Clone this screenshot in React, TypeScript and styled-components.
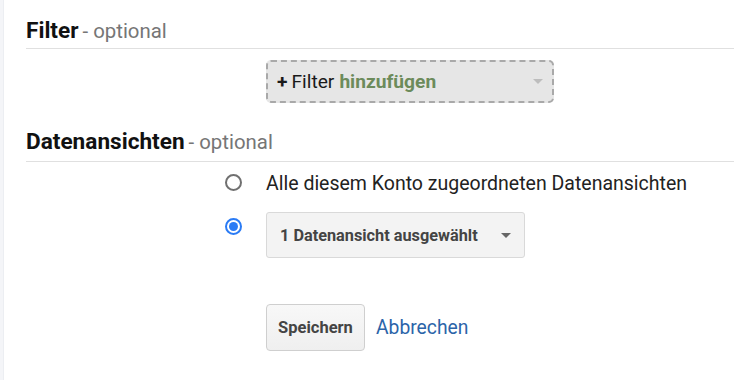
import React from "react";
import styled, { createGlobalStyle } from "styled-components";

const Global = createGlobalStyle`
  html, body { margin: 0; padding: 0; background: #fff; }
  body { font-family: Roboto, "Noto Sans", "Liberation Sans", sans-serif; }
`;

const Page = styled.div`
  display: flex;
  width: 734px;
  height: 380px;
  overflow: hidden;
`;

const Strip = styled.div`
  width: 3px;
  flex: none;
  background: #f4f5f8;
  border-right: 1px solid #eceef2;
`;

const Content = styled.div`
  flex: 1;
  padding-left: 22px;
  display: flex;
  flex-direction: column;
`;

const Heading = styled.div<{ $top: number; $pb: number }>`
  margin-top: ${(p) => p.$top}px;
  padding-bottom: ${(p) => p.$pb}px;
  border-bottom: 1px solid #e0e0e0;
  line-height: 26px;
  height: 26px;
  white-space: nowrap;
`;

const Title = styled.span`
  font-size: 22.6px;
  font-weight: 700;
  color: #111;
`;

const Optional = styled.span`
  font-size: 20.4px;
  color: #767676;
`;

const Body = styled.div<{ $top: number }>`
  padding-left: 240px;
  margin-top: ${(p) => p.$top}px;
  display: flex;
  flex-direction: column;
`;

const FilterButton = styled.div`
  box-sizing: border-box;
  width: 288px;
  height: 43px;
  background: #e6e6e6;
  border: 2px dashed #a9a9a9;
  border-radius: 5px;
  display: flex;
  align-items: center;
  padding: 0 9px 0 9px;
  font-size: 19.2px;
  color: #1a1a1a;
`;

const Plus = styled.span`
  font-weight: 700;
  margin-right: 4px;
`;

const Green = styled.span`
  font-weight: 700;
  color: #6c8b5b;
  margin-left: 5px;
`;

const Caret = styled.span<{ $color: string }>`
  margin-left: auto;
  width: 0;
  height: 0;
  border-left: 5px solid transparent;
  border-right: 5px solid transparent;
  border-top: 5px solid ${(p) => p.$color};
`;

const OptionRow = styled.div<{ $top?: number }>`
  display: flex;
  align-items: flex-start;
  margin-top: ${(p) => p.$top ?? 0}px;
  margin-left: -41px;
`;

const Radio = styled.span<{ $checked?: boolean; $mt: number }>`
  box-sizing: border-box;
  flex: none;
  width: 17px;
  height: 17px;
  border-radius: 50%;
  margin-top: ${(p) => p.$mt}px;
  margin-right: 24px;
  border: 2px solid ${(p) => (p.$checked ? "#2a7bf5" : "#707070")};
  position: relative;
  &::after {
    content: "";
    display: ${(p) => (p.$checked ? "block" : "none")};
    position: absolute;
    left: 2px;
    top: 2px;
    width: 9px;
    height: 9px;
    border-radius: 50%;
    background: #2a7bf5;
  }
`;

const Label = styled.span`
  font-size: 19.5px;
  line-height: 24px;
  color: #222;
  white-space: nowrap;
`;

const Select = styled.div`
  box-sizing: border-box;
  width: 259px;
  height: 46px;
  background: #f3f3f3;
  border: 1px solid #d9d9d9;
  border-radius: 3px;
  display: flex;
  align-items: center;
  padding: 0 13px 0 13px;
  font-size: 16.3px;
  font-weight: 700;
  color: #444;
  white-space: nowrap;
`;

const Actions = styled.div`
  display: flex;
  align-items: center;
  margin-top: 46px;
`;

const SaveButton = styled.button`
  box-sizing: border-box;
  width: 99px;
  height: 47px;
  border: 1.5px solid #cfcfcf;
  border-radius: 4px;
  background: linear-gradient(#f8f8f8, #efefef);
  font-family: Roboto, "Noto Sans", "Liberation Sans", sans-serif;
  font-size: 16.5px;
  font-weight: 700;
  color: #444;
  padding: 0;
`;

const CancelLink = styled.a`
  margin-left: 11px;
  font-size: 19.3px;
  color: #2b64a9;
  text-decoration: none;
`;

export default function App() {
  return (
    <>
      <Global />
      <Page>
        <Strip />
        <Content>
          <Heading $top={18} $pb={4}>
            <Title>Filter</Title> <Optional>- optional</Optional>
          </Heading>
          <Body $top={11}>
            <FilterButton>
              <Plus>+</Plus>Filter<Green>hinzufügen</Green>
              <Caret $color="#bdbdbd" />
            </FilterButton>
          </Body>
          <Heading $top={26} $pb={6}>
            <Title>Datenansichten</Title> <Optional>- optional</Optional>
          </Heading>
          <Body $top={10}>
            <OptionRow>
              <Radio $mt={2} />
              <Label>Alle diesem Konto zugeordneten Datenansichten</Label>
            </OptionRow>
            <OptionRow $top={16}>
              <Radio $checked $mt={6} />
              <Select>
                1 Datenansicht ausgewählt
                <Caret $color="#666" />
              </Select>
            </OptionRow>
            <Actions>
              <SaveButton>Speichern</SaveButton>
              <CancelLink href="#">Abbrechen</CancelLink>
            </Actions>
          </Body>
        </Content>
      </Page>
    </>
  );
}
